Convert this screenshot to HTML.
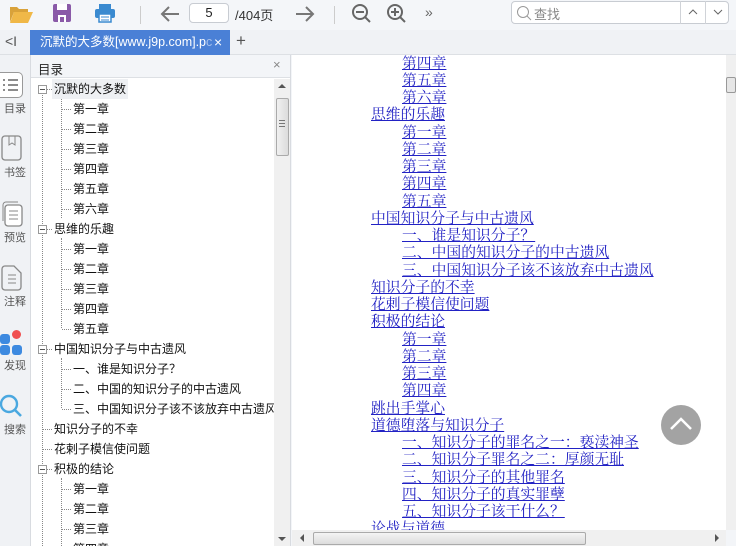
<!DOCTYPE html>
<html style="width:736px;height:546px;overflow:hidden"><head><meta charset="utf-8"><style>
*{margin:0;padding:0;box-sizing:border-box}
body{width:736px;height:546px;overflow:hidden;background:#f3f5f8;font-family:"Liberation Sans","Noto Sans CJK SC",sans-serif;position:relative;font-size:12px;color:#222}
.a{position:absolute}
.tb{left:0;top:0;width:736px;height:30px;background:#f4f6f9}
.tabbar{left:0;top:30px;width:736px;height:25px;background:#f0f2f5;border-bottom:1px solid #dde0e4}
.side{left:0;top:55px;width:30px;height:491px;background:#f0f2f5}
.toc{left:30px;top:55px;width:261px;height:491px;background:#fff;border-left:1px solid #d8dbe0;border-right:1px solid #d8dbe0}
.row{position:absolute;height:20px;line-height:20px;font-size:12px;white-space:nowrap;color:#111}
.ct{left:292px;top:55px;width:434px;height:475px;background:#fff;overflow:hidden}
.ln{position:absolute;font-family:"Liberation Serif","Noto Serif CJK SC",serif;font-size:14.8px;line-height:17px;color:#2222c4;text-decoration:underline;white-space:nowrap}
.sl{font-size:11px;color:#555;position:absolute;left:0;width:30px;text-align:center}
#clip{position:absolute;left:0;top:0;width:736px;height:546px;overflow:hidden}
</style></head><body><div id="clip">
<div class="a tb"></div>
<svg class="a" style="left:8px;top:3px" width="26" height="22" viewBox="0 0 26 22"><path d="M2 4h7l2 2h9v3H6L2 19z" fill="#d9a23a"/><path d="M6 9h19l-5 11H2z" fill="#f0b848"/></svg>
<svg class="a" style="left:52px;top:3px" width="20" height="20"><rect x="1" y="1" width="18" height="18" rx="2" fill="#8a5aa8"/><rect x="5" y="1" width="10" height="6" fill="#fff"/><rect x="6" y="12" width="8" height="7" fill="#fff"/><rect x="8" y="14" width="4" height="5" fill="#8a5aa8"/></svg>
<svg class="a" style="left:94px;top:3px" width="22" height="20"><rect x="5" y="1" width="12" height="5" fill="#3a8ad0"/><rect x="1" y="6" width="20" height="9" rx="2" fill="#3a8ad0"/><rect x="5" y="11" width="12" height="8" fill="#fff" stroke="#3a8ad0" stroke-width="1.5"/><line x1="7" y1="14" x2="15" y2="14" stroke="#3a8ad0"/><line x1="7" y1="17" x2="15" y2="17" stroke="#3a8ad0"/></svg>
<div class="a" style="left:140px;top:6px;width:1px;height:18px;background:#ccc"></div>
<svg class="a" style="left:159px;top:4px" width="22" height="20"><path d="M20 10H3M10 3L3 10l7 7" stroke="#777" stroke-width="2" fill="none"/></svg>
<div class="a" style="left:189px;top:3px;width:40px;height:20px;background:#fff;border:1px solid #c8ccd2;border-radius:4px;text-align:center;line-height:18px;font-size:13px">5</div>
<div class="a" style="left:235px;top:5px;font-size:13px;color:#333">/404页</div>
<svg class="a" style="left:294px;top:4px" width="22" height="20"><path d="M2 10h17M12 3l7 7-7 7" stroke="#777" stroke-width="2" fill="none"/></svg>
<div class="a" style="left:334px;top:6px;width:1px;height:18px;background:#ccc"></div>
<svg class="a" style="left:351px;top:3px" width="22" height="22"><circle cx="9" cy="9" r="7" stroke="#666" stroke-width="2" fill="none"/><path d="M5 9h8M14 14l5 5" stroke="#666" stroke-width="2"/></svg>
<svg class="a" style="left:386px;top:3px" width="22" height="22"><circle cx="9" cy="9" r="7" stroke="#666" stroke-width="2" fill="none"/><path d="M5 9h8M9 5v8M14 14l5 5" stroke="#666" stroke-width="2"/></svg>
<div class="a" style="left:425px;top:4px;font-size:14px;color:#666">»</div>
<div class="a" style="left:511px;top:1px;width:218px;height:23px;background:#fff;border:1px solid #c8ccd2;border-radius:4px"></div>
<svg class="a" style="left:516px;top:5px" width="16" height="16"><circle cx="7" cy="7" r="5.5" stroke="#999" fill="none"/><path d="M11 11l4 4" stroke="#999"/></svg>
<div class="a" style="left:534px;top:4px;font-size:13px;color:#888">查找</div>
<div class="a" style="left:680px;top:1px;width:1px;height:23px;background:#d0d3d8"></div>
<div class="a" style="left:705px;top:1px;width:1px;height:23px;background:#d0d3d8"></div>
<svg class="a" style="left:688px;top:8px" width="10" height="8"><path d="M1 6l4-4 4 4" stroke="#666" fill="none"/></svg>
<svg class="a" style="left:713px;top:8px" width="10" height="8"><path d="M1 2l4 4 4-4" stroke="#666" fill="none"/></svg>
<div class="a tabbar"></div>
<div class="a" style="left:5px;top:33px;font-size:14px;color:#555">&lt;I</div>
<div class="a" style="left:30px;top:30px;width:200px;height:25px;background:#4a80d6;color:#fff;font-size:12.5px;line-height:25px;padding-left:10px;white-space:nowrap;overflow:hidden">沉默的大多数[www.j9p.com].p<span style="opacity:.5">c</span></div>
<div class="a" style="left:214px;top:34px;color:#fff;font-size:14px">×</div>
<div class="a" style="left:236px;top:31px;color:#555;font-size:17px">+</div>
<div class="a side"></div>
<div class="a" style="left:0;top:72px;width:23px;height:26px;border:1px solid #999;border-left:none;border-radius:0 5px 5px 0;background:#fff"></div>
<svg class="a" style="left:2px;top:77px" width="18" height="16"><g stroke="#666" stroke-width="1.6"><path d="M1 3h2M6 3h10M1 8h2M6 8h10M1 13h2M6 13h10"/></g></svg>
<div class="sl" style="top:100px">目录</div>
<svg class="a" style="left:1px;top:135px" width="22" height="26"><rect x="1" y="1" width="19" height="24" rx="3" fill="none" stroke="#888" stroke-width="1.3"/><path d="M8 1v9l3-2 3 2V1" stroke="#888" fill="none"/></svg>
<div class="sl" style="top:164px">书签</div>
<svg class="a" style="left:1px;top:201px" width="22" height="26"><rect x="4" y="4" width="17" height="21" rx="3" fill="#fff" stroke="#888" stroke-width="1.3"/><path d="M2 20V4a3 3 0 013-3h12" stroke="#888" fill="none"/><path d="M8 10h9M8 14h9M8 18h9" stroke="#888"/></svg>
<div class="sl" style="top:229px">预览</div>
<svg class="a" style="left:1px;top:265px" width="22" height="26"><path d="M1 4a3 3 0 013-3h9l7 7v14a3 3 0 01-3 3H4a3 3 0 01-3-3z" fill="none" stroke="#888" stroke-width="1.3"/><path d="M7 10h8M7 14h8M7 18h8" stroke="#888"/></svg>
<div class="sl" style="top:293px">注释</div>
<div class="a" style="left:0;top:334px;width:10px;height:10px;background:#3d8ae0;border-radius:3px"></div>
<div class="a" style="left:12px;top:330px;width:9px;height:9px;background:#f05050;border-radius:50%"></div>
<div class="a" style="left:0;top:345px;width:10px;height:10px;background:#3d8ae0;border-radius:3px"></div>
<div class="a" style="left:12px;top:345px;width:10px;height:10px;background:#3d8ae0;border-radius:3px"></div>
<div class="sl" style="top:357px">发现</div>
<svg class="a" style="left:0;top:394px" width="24" height="26"><circle cx="9" cy="10" r="8" stroke="#4aa8e0" stroke-width="2.4" fill="none"/><path d="M15 16l6 6" stroke="#4aa8e0" stroke-width="2.6"/></svg>
<div class="sl" style="top:421px">搜索</div>
<div class="a toc"></div>
<div class="a" style="left:31px;top:55px;width:259px;height:23px;background:#f3f5f8;border-bottom:1px solid #dde0e4"></div>
<div class="a" style="left:38px;top:59px;font-size:12.5px">目录</div>
<div class="a" style="left:273px;top:57px;font-size:13px;color:#888">×</div>
<div class="a" style="left:274px;top:79px;width:16px;height:467px;background:#f0f0f0"></div>
<div class="a" style="left:276px;top:98px;width:13px;height:58px;background:linear-gradient(90deg,#f0f0f0,#dcdcdc);border:1px solid #aaa;border-radius:2px"></div>
<div class="a" style="left:279px;top:120px;width:6px;height:7px;border-top:1px solid #777;border-bottom:1px solid #777"></div>
<div class="a" style="left:279px;top:123px;width:6px;height:1px;background:#777"></div>
<div class="a" style="left:278px;top:84px;width:0;height:0;border:4px solid transparent;border-bottom-color:#555;border-top:none"></div>
<div class="a" style="left:278px;top:537px;width:0;height:0;border:4px solid transparent;border-top-color:#555;border-bottom:none"></div>
<div class="a" style="left:42px;top:93px;width:0;height:453px;border-left:1px dotted #888"></div>
<div class="a" style="left:61px;top:98px;width:0;height:120px;border-left:1px dotted #888"></div>
<div class="a" style="left:61px;top:238px;width:0;height:90px;border-left:1px dotted #888"></div>
<div class="a" style="left:61px;top:358px;width:0;height:50px;border-left:1px dotted #888"></div>
<div class="a" style="left:61px;top:478px;width:0;height:68px;border-left:1px dotted #888"></div>
<div class="a" style="left:52px;top:79px;width:76px;height:20px;background:#eef0f3"></div>
<div id="tree"></div>
<div class="a ct" id="ct"></div>
<div class="a" style="left:661px;top:405px;width:40px;height:40px;border-radius:50%;background:#a3a3a3"></div>
<svg class="a" style="left:668px;top:414px" width="26" height="20"><path d="M3 15l10-10 10 10" stroke="#fff" stroke-width="2.5" fill="none"/></svg>
<div class="a" style="left:726px;top:55px;width:10px;height:475px;background:#f0f0f0"></div>
<div class="a" style="left:726px;top:77px;width:10px;height:16px;background:#e6e6e6;border:1px solid #999;border-radius:2px"></div>
<div class="a" style="left:292px;top:530px;width:434px;height:16px;background:#f0f0f0"></div>
<div class="a" style="left:313px;top:532px;width:273px;height:13px;background:linear-gradient(#f4f4f4,#dcdcdc);border:1px solid #aaa;border-radius:2px"></div>
<div class="a" style="left:300px;top:534px;width:0;height:0;border:4px solid transparent;border-right-color:#555;border-left:none"></div>
<div class="a" style="left:715px;top:534px;width:0;height:0;border:4px solid transparent;border-left-color:#555;border-right:none"></div>
</div>
<script>
var t=[[0,'沉默的大多数',1],[1,'第一章'],[1,'第二章'],[1,'第三章'],[1,'第四章'],[1,'第五章'],[1,'第六章'],[0,'思维的乐趣',1],[1,'第一章'],[1,'第二章'],[1,'第三章'],[1,'第四章'],[1,'第五章'],[0,'中国知识分子与中古遗风',1],[1,'一、谁是知识分子？'],[1,'二、中国的知识分子的中古遗风'],[1,'三、中国知识分子该不该放弃中古遗风'],[0,'知识分子的不幸'],[0,'花剌子模信使问题'],[0,'积极的结论',1],[1,'第一章'],[1,'第二章'],[1,'第三章'],[1,'第四章']];
var h='';t.forEach(function(r,i){var y=79+i*20;
if(r[0]==0){if(r[2])h+='<div class="a" style="left:38px;top:'+(y+6)+'px;width:9px;height:9px;border:1px solid #999;background:#fff"></div><div class="a" style="left:40px;top:'+(y+10)+'px;width:5px;height:1px;background:#555"></div>';
h+='<div class="a" style="left:'+(r[2]?47:43)+'px;top:'+(y+10)+'px;width:'+(r[2]?5:9)+'px;border-top:1px dotted #888"></div><div class="row" style="left:54px;top:'+y+'px">'+r[1]+'</div>';}
else h+='<div class="a" style="left:62px;top:'+(y+10)+'px;width:9px;border-top:1px dotted #888"></div><div class="row" style="left:73px;top:'+y+'px;max-width:201px;overflow:hidden">'+r[1]+'</div>';});
document.getElementById('tree').innerHTML=h;
var c=[[1,'第四章'],[1,'第五章'],[1,'第六章'],[0,'思维的乐趣'],[1,'第一章'],[1,'第二章'],[1,'第三章'],[1,'第四章'],[1,'第五章'],[0,'中国知识分子与中古遗风'],[1,'一、谁是知识分子？'],[1,'二、中国的知识分子的中古遗风'],[1,'三、中国知识分子该不该放弃中古遗风'],[0,'知识分子的不幸'],[0,'花剌子模信使问题'],[0,'积极的结论'],[1,'第一章'],[1,'第二章'],[1,'第三章'],[1,'第四章'],[0,'跳出手掌心'],[0,'道德堕落与知识分子'],[1,'一、知识分子的罪名之一：亵渎神圣'],[1,'二、知识分子罪名之二：厚颜无耻'],[1,'三、知识分子的其他罪名'],[1,'四、知识分子的真实罪孽'],[1,'五、知识分子该干什么？'],[0,'论战与道德']];
var g='';c.forEach(function(r,i){g+='<div class="ln" style="left:'+(r[0]?110:79)+'px;top:'+(0.5+i*17.25)+'px">'+r[1]+'</div>';});
document.getElementById('ct').innerHTML=g;
</script>
</body></html>
